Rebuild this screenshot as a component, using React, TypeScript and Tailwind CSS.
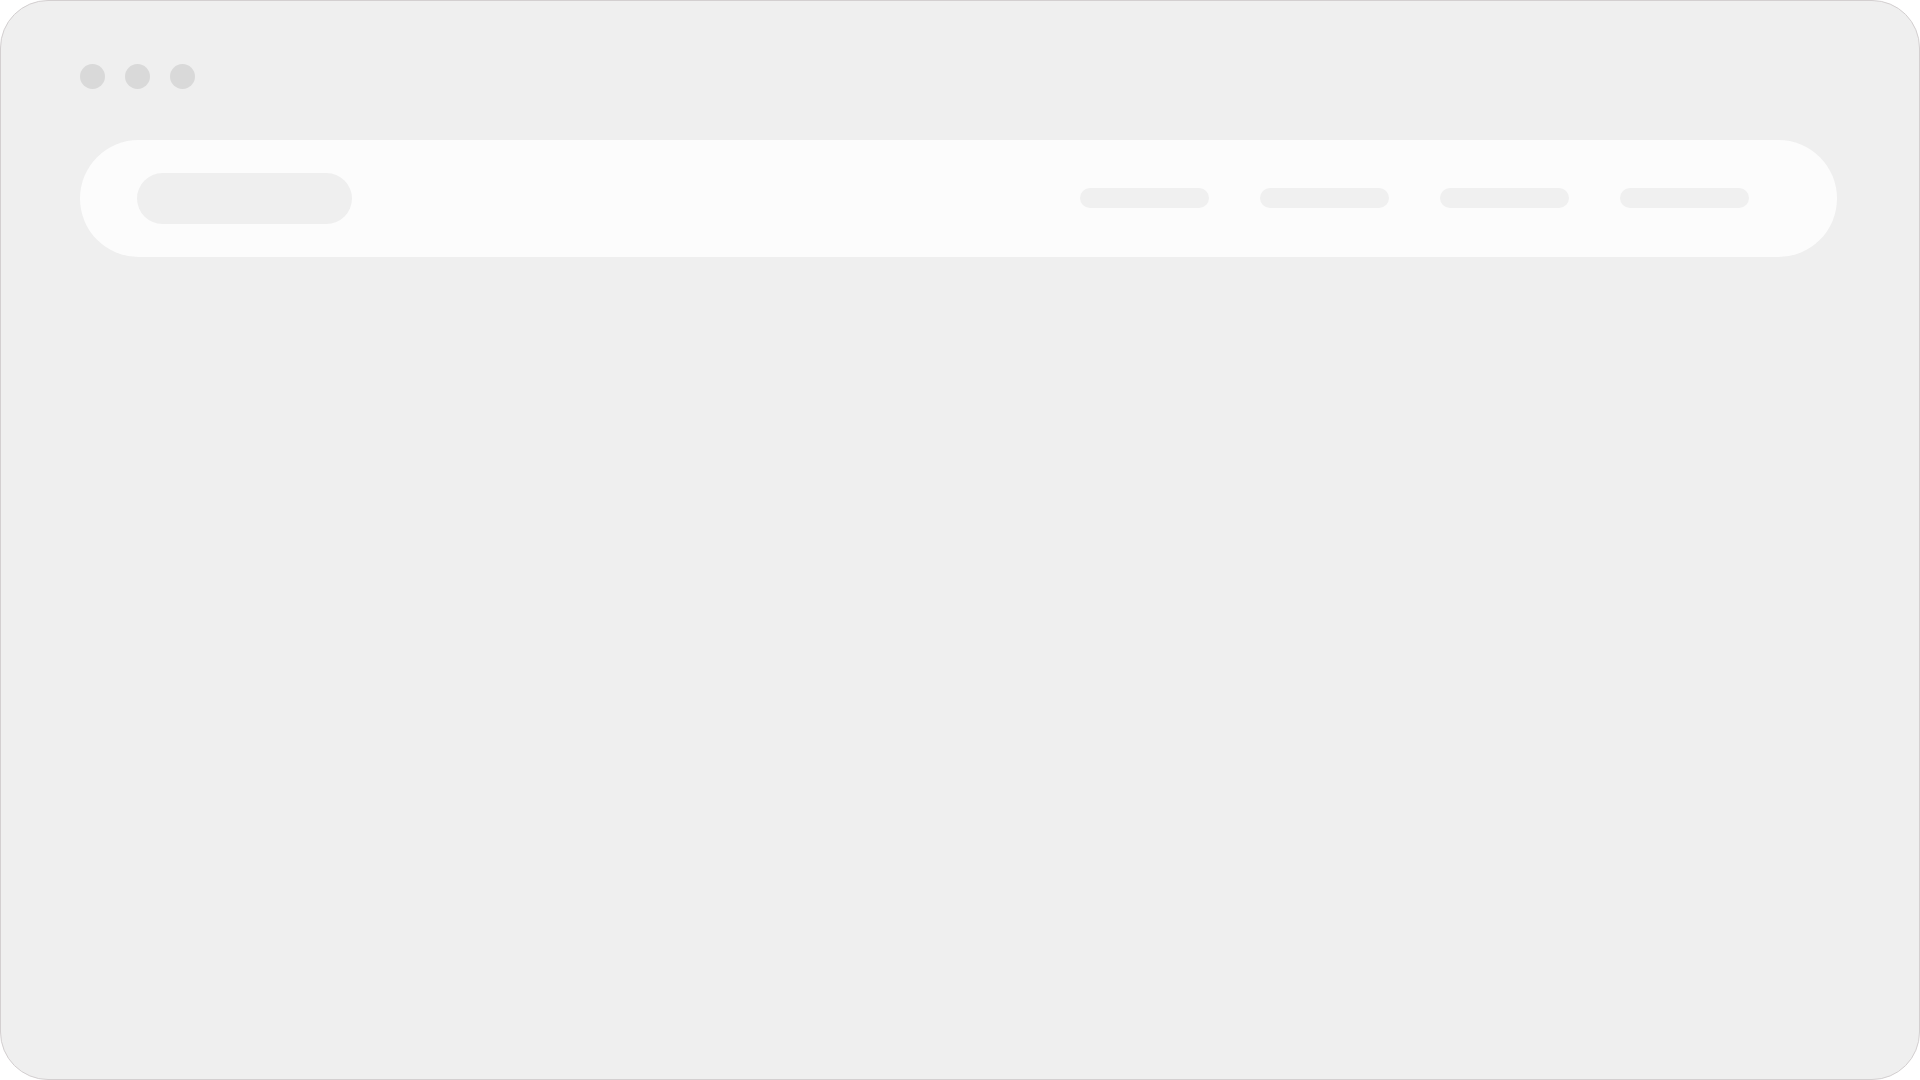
import React from "react";

export default function App() {
  return (
    <div className="w-[1920px] h-[1080px] overflow-hidden bg-white">
      <div className="w-[1920px] h-[1080px] rounded-[48px] border border-[#d3cfd0] bg-[#efefef] pl-[79px] pt-[63px] flex flex-col">
        <div className="flex gap-[20px] h-[25px]">
          <div className="w-[25px] h-[25px] rounded-full bg-[#d9d9d9]" />
          <div className="w-[25px] h-[25px] rounded-full bg-[#d9d9d9]" />
          <div className="w-[25px] h-[25px] rounded-full bg-[#d9d9d9]" />
        </div>
        <div className="mt-[51px] w-[1757px] h-[117px] rounded-full bg-[#fcfcfc] flex items-center justify-between pl-[57px] pr-[88px]">
          <div className="w-[215px] h-[51px] rounded-full bg-[#efefef]" />
          <div className="flex items-center gap-[51px] -translate-y-px">
            <div className="w-[129px] h-[20px] rounded-full bg-[#f0f0f0]" />
            <div className="w-[129px] h-[20px] rounded-full bg-[#f0f0f0]" />
            <div className="w-[129px] h-[20px] rounded-full bg-[#f0f0f0]" />
            <div className="w-[129px] h-[20px] rounded-full bg-[#f0f0f0]" />
          </div>
        </div>
      </div>
    </div>
  );
}
